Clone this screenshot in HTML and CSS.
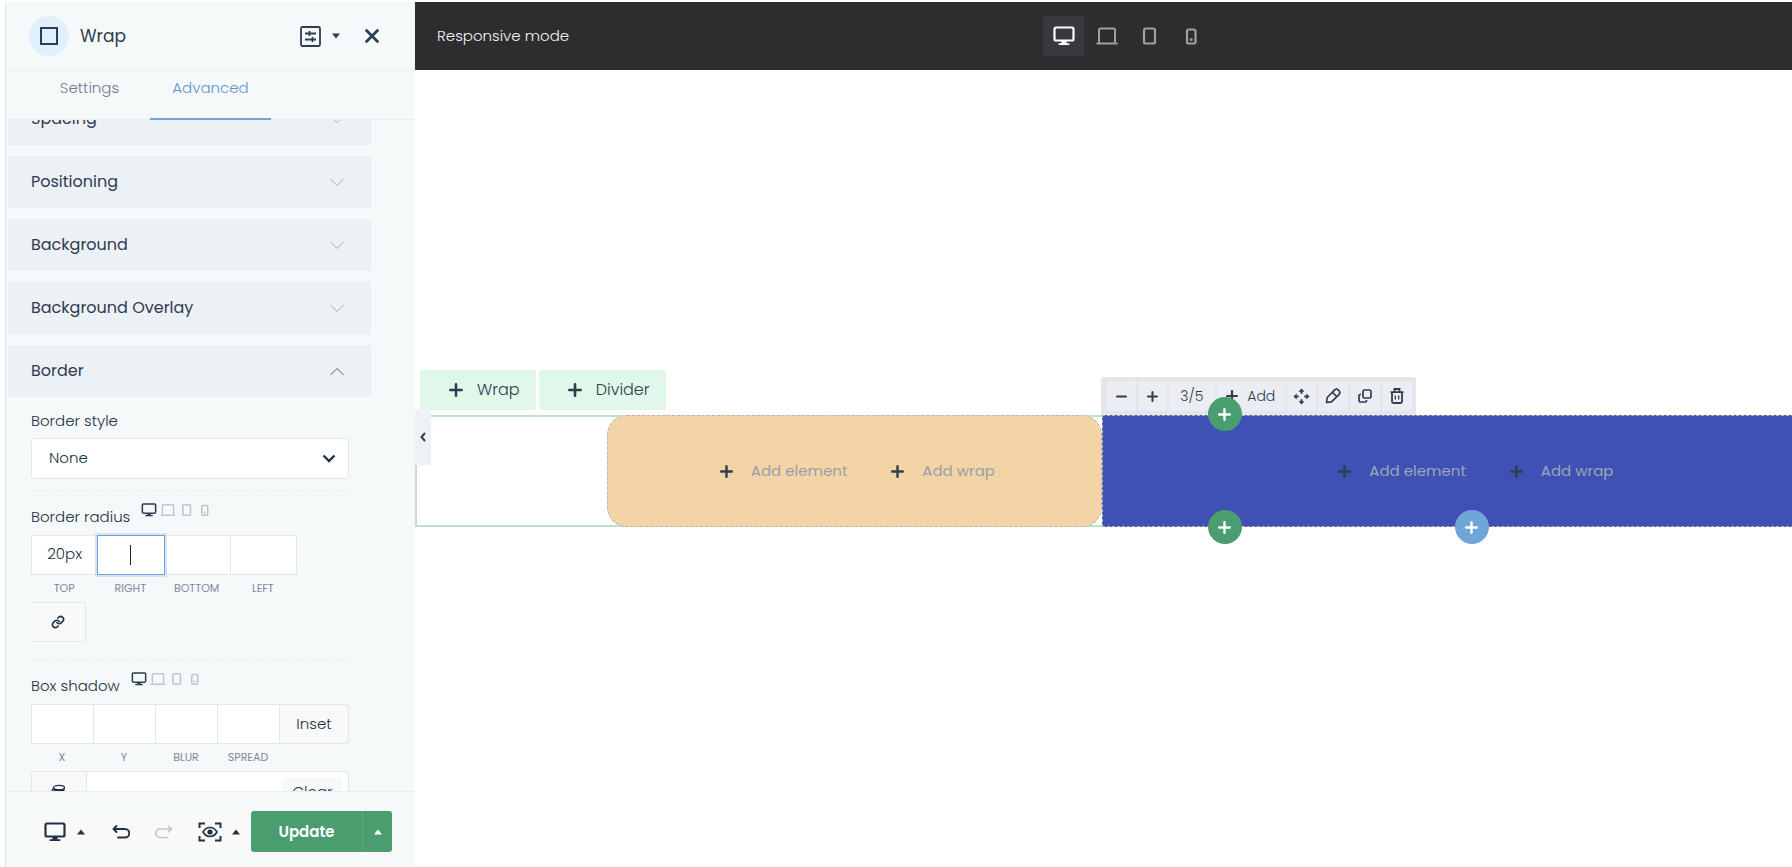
FILE: index.html
```
<!DOCTYPE html>
<html lang="en">
<head>
<meta charset="utf-8">
<title>Wrap – Advanced</title>
<link rel="stylesheet" href="styles.css">
</head>
<body>
<svg class="defs" aria-hidden="true">
  <symbol id="desktop" viewBox="0 0 22 20"><rect x="1.5" y="1.5" width="19" height="13" rx="1.5" fill="none" stroke="currentColor" stroke-width="2.200"/><path d="M8.500 15h5v2.200h2.200a.9.900 0 0 1 0 1.800H6.300a.9.900 0 0 1 0-1.800h2.200z" fill="currentColor"/></symbol>
  <symbol id="laptop" viewBox="0 0 22 20"><path d="M3 16.500V4A1.500 1.500 0 0 1 4.500 2.500h13A1.500 1.500 0 0 1 19 4v12.500" fill="none" stroke="currentColor" stroke-width="2"/><path d="M1.300 17.500h19.400" stroke="currentColor" stroke-width="2" stroke-linecap="round"/></symbol>
  <symbol id="tablet" viewBox="0 0 22 20"><rect x="5" y="2.500" width="11" height="15" rx="1.800" fill="none" stroke="currentColor" stroke-width="2.200"/></symbol>
  <symbol id="mobile" viewBox="0 0 22 20"><rect x="5" y="3.500" width="8.500" height="14" rx="1.800" fill="none" stroke="currentColor" stroke-width="2.200"/><circle cx="9.200" cy="13.500" r="1.500" fill="currentColor"/></symbol>
  <symbol id="plus" viewBox="0 0 14 14"><path d="M7 1.300v11.400M1.300 7h11.400" stroke="currentColor" stroke-width="2.600" stroke-linecap="round"/></symbol>
  <symbol id="up" viewBox="0 0 8 6"><path d="M4 .4 8 5.600H0z" fill="currentColor"/></symbol>
  <symbol id="chevron" viewBox="0 0 16 9"><path d="M1.500 1L8 7.500 14.500 1" fill="none" stroke="currentColor" stroke-width="1"/></symbol>
</svg>

<aside class="sidebar">
  <header class="head">
    <span class="badge"><svg width="20" height="20" viewBox="0 0 20 20"><rect x="2" y="2" width="16" height="16" fill="none" stroke="currentColor" stroke-width="2"/></svg></span>
    <h1 class="title">Wrap</h1>
    <button class="plain options" aria-label="Presets">
      <svg width="21" height="21" viewBox="0 0 21 21" fill="none" stroke="currentColor" stroke-width="1.800"><rect x="1" y="1" width="19" height="19" rx="1.500"/><path d="M5 7.500h11M5 13.500h11M9.500 5v5M12.500 11v5"/></svg>
      <svg width="8" height="6" viewBox="0 0 8 6"><path d="M0 .4h8L4 5.600z" fill="currentColor"/></svg>
    </button>
    <button class="plain close" aria-label="Close"><svg width="16" height="16" viewBox="0 0 16 16"><path d="M2.500 2.500l11 11m0-11l-11 11" stroke="currentColor" stroke-width="2.800" stroke-linecap="round"/></svg></button>
  </header>
  <nav class="tabs">
    <button class="tab">Settings</button>
    <button class="tab active">Advanced</button>
  </nav>

  <div class="scroller">
    <div class="groups">
      <button class="group">Spacing<svg width="16" height="9"><use href="#chevron"/></svg></button>
      <button class="group">Positioning<svg width="16" height="9"><use href="#chevron"/></svg></button>
      <button class="group">Background<svg width="16" height="9"><use href="#chevron"/></svg></button>
      <button class="group">Background Overlay<svg width="16" height="9"><use href="#chevron"/></svg></button>
      <button class="group open">Border<svg width="16" height="9"><use href="#chevron"/></svg></button>
    </div>
    <div class="fields">
      <div class="field">
        <label class="label" for="style">Border style</label>
        <div class="select-wrap">
          <select class="select" id="style"><option>None</option></select>
          <svg class="arrow" width="14" height="9" viewBox="0 0 14 9"><path d="M1.500 1.500L7 7l5.500-5.500" fill="none" stroke="currentColor" stroke-width="2.400"/></svg>
        </div>
      </div>
      <div class="field">
        <div class="label-row"><span class="label">Border radius</span>
          <span class="devs"><svg class="on" width="16" height="14"><use href="#desktop"/></svg><svg width="16" height="14"><use href="#laptop"/></svg><svg width="16" height="14"><use href="#tablet"/></svg><svg width="16" height="14"><use href="#mobile"/></svg></span>
        </div>
        <div class="radius">
          <label class="cell"><input class="box" value="20px"><span>TOP</span></label>
          <label class="cell focus"><input class="box"><i class="caret"></i><span>RIGHT</span></label>
          <label class="cell"><input class="box"><span>BOTTOM</span></label>
          <label class="cell"><input class="box"><span>LEFT</span></label>
        </div>
        <button class="link" aria-label="Link values"><svg width="14" height="14" viewBox="0 0 24 24" fill="none" stroke="currentColor" stroke-width="2.800" stroke-linecap="round" stroke-linejoin="round"><path d="M10 13a5 5 0 0 0 7.500.5l3-3a5 5 0 0 0-7-7l-1.700 1.700"/><path d="M14 11a5 5 0 0 0-7.500-.5l-3 3a5 5 0 0 0 7 7l1.700-1.700"/></svg></button>
      </div>
      <div class="field">
        <div class="label-row"><span class="label">Box shadow</span>
          <span class="devs"><svg class="on" width="16" height="14"><use href="#desktop"/></svg><svg width="16" height="14"><use href="#laptop"/></svg><svg width="16" height="14"><use href="#tablet"/></svg><svg width="16" height="14"><use href="#mobile"/></svg></span>
        </div>
        <div class="shadow">
          <label class="cell"><input class="box"><span>X</span></label>
          <label class="cell"><input class="box"><span>Y</span></label>
          <label class="cell"><input class="box"><span>BLUR</span></label>
          <label class="cell"><input class="box"><span>SPREAD</span></label>
          <button class="inset">Inset</button>
        </div>
        <div class="color">
          <button class="swatch" aria-label="Pick colour"><svg width="16" height="16" viewBox="0 0 16 16"><path d="M2.500 4v8c0 3 11 3 11 0V4z" fill="currentColor"/><ellipse cx="8" cy="3.600" rx="5.500" ry="2.200" fill="#fff" stroke="currentColor" stroke-width="1.400"/><path d="M2.500 4L1 7" stroke="currentColor" stroke-width="1.400"/></svg></button>
          <input class="color-input" aria-label="Shadow colour">
          <button class="clear">Clear</button>
        </div>
      </div>
    </div>
  </div>

  <footer class="foot">
    <button class="tool preview" aria-label="Device"><svg width="22" height="20"><use href="#desktop"/></svg><svg width="8" height="6"><use href="#up"/></svg></button>
    <button class="tool undo" aria-label="Undo"><svg width="18" height="16" viewBox="0 0 18 16" fill="none" stroke="currentColor" stroke-width="1.900" stroke-linecap="round"><path d="M4.500 2L1.500 5l3 3M2 5h11a4 4 0 0 1 0 8.500H6"/></svg></button>
    <button class="tool redo" aria-label="Redo"><svg width="18" height="16" viewBox="0 0 18 16" fill="none" stroke="currentColor" stroke-width="1.700" stroke-linecap="round"><path d="M13.500 2l3 3-3 3M16 5H5a4 4 0 0 0 0 8.500H12"/></svg></button>
    <button class="tool view" aria-label="Preview"><svg width="24" height="20" viewBox="0 0 24 20" fill="none" stroke="currentColor" stroke-width="2"><path d="M1.500 6V1.500H7M17 1.500h5.500V6M22.500 14v4.500H17M7 18.500H1.500V14"/><path d="M5 10c3.500-6 10.500-6 14 0-3.500 6-10.500 6-14 0z" stroke-width="1.600"/><circle cx="12" cy="10" r="2.600" fill="currentColor" stroke="none"/></svg><svg width="8" height="6"><use href="#up"/></svg></button>
    <div class="save"><button class="update">Update</button><button class="more" aria-label="More"><svg width="8" height="6"><use href="#up"/></svg></button></div>
  </footer>
</aside>

<main class="main">
  <header class="bar">
    <span>Responsive mode</span>
    <div class="modes">
      <button class="mode on" aria-label="Desktop"><svg width="22" height="20"><use href="#desktop"/></svg></button>
      <button class="mode" aria-label="Laptop"><svg width="22" height="20"><use href="#laptop"/></svg></button>
      <button class="mode" aria-label="Tablet"><svg width="22" height="20"><use href="#tablet"/></svg></button>
      <button class="mode" aria-label="Mobile"><svg width="22" height="20"><use href="#mobile"/></svg></button>
    </div>
  </header>
  <div class="canvas">
    <div class="adders">
      <button class="adder"><svg width="14" height="14"><use href="#plus"/></svg>Wrap</button>
      <button class="adder"><svg width="14" height="14"><use href="#plus"/></svg>Divider</button>
    </div>
    <section class="section">
      <button class="collapse" aria-label="Collapse panel"><svg width="6" height="10" viewBox="0 0 6 10"><path d="M5 1L1.500 5 5 9" fill="none" stroke="currentColor" stroke-width="2"/></svg></button>
      <div class="wraps">
        <div class="wrap sand">
          <button class="insert"><svg width="13" height="13"><use href="#plus"/></svg>Add element</button>
          <button class="insert"><svg width="13" height="13"><use href="#plus"/></svg>Add wrap</button>
        </div>
        <div class="wrap blue">
          <button class="insert"><svg width="13" height="13"><use href="#plus"/></svg>Add element</button>
          <button class="insert"><svg width="13" height="13"><use href="#plus"/></svg>Add wrap</button>
          <div class="toolbar">
            <button aria-label="Narrower"><svg width="11" height="11" viewBox="0 0 14 14"><path d="M1.300 7h11.400" stroke="currentColor" stroke-width="2.600" stroke-linecap="round"/></svg></button>
            <button aria-label="Wider"><svg width="11" height="11"><use href="#plus"/></svg></button>
            <button class="size">3/5</button>
            <button class="add"><svg width="12" height="12"><use href="#plus"/></svg>Add</button>
            <button aria-label="Move"><svg width="17" height="17" viewBox="0 0 17 17" fill="currentColor"><path d="M8.500 .5l3 3.200h-2v2h-2v-2h-2zM8.500 16.500l3-3.200h-2v-2h-2v2h-2zM.5 8.500l3.200-3v2h2v2h-2v2zM16.500 8.500l-3.200-3v2h-2v2h2v2z"/></svg></button>
            <button class="wide" aria-label="Edit"><svg width="16" height="16" viewBox="0 0 16 16" fill="none" stroke="currentColor" stroke-width="1.700" stroke-linejoin="round" stroke-linecap="round"><path d="M1.500 14.500l.7-5L9.200 2.300a3.100 3.100 0 0 1 4.500 4.500L6.500 13.800zM8 4.800l3.200 3.200"/></svg></button>
            <button class="wide" aria-label="Duplicate"><svg width="14" height="14" viewBox="0 0 14 14" fill="none" stroke="currentColor" stroke-width="1.700"><rect x="5" y="1" width="8" height="8" rx="1.500"/><path d="M3 5.500h-.7A1.300 1.300 0 0 0 1 6.800v4.900A1.300 1.300 0 0 0 2.300 13h4.900a1.300 1.300 0 0 0 1.300-1.300V11"/></svg></button>
            <button class="wide" aria-label="Delete"><svg width="14" height="16" viewBox="0 0 14 16" fill="none" stroke="currentColor" stroke-width="1.800"><path d="M.5 4.200h13M4.500 4V1h5v3M2 4v9.500A1.500 1.500 0 0 0 3.500 15h7a1.500 1.500 0 0 0 1.500-1.500V4"/><path d="M5.300 7.500v4M8.700 7.500v4" stroke-width="1.300"/></svg></button>
          </div>
          <button class="dot top" aria-label="Add before"><svg width="13" height="13"><use href="#plus"/></svg></button>
          <button class="dot bottom" aria-label="Add after"><svg width="13" height="13"><use href="#plus"/></svg></button>
          <button class="dot center" aria-label="Add section"><svg width="13" height="13"><use href="#plus"/></svg></button>
        </div>
      </div>
    </section>
  </div>
</main>
</body>
</html>
```
FILE: styles.css
```
* { box-sizing: border-box; }
body {
  margin: 0; padding: 2px 0 0 5px; height: 100vh; display: flex; overflow: hidden;
  background: #fff; color: #2c3e50;
  font: 300 15px/20px Poppins, Inter, sans-serif;
}
button, input, select { font: inherit; color: inherit; margin: 0; padding: 0; border: 0; background: none; }
svg { display: block; flex: none; }
.defs { position: absolute; width: 0; height: 0; }

.sidebar { width: 410px; flex: none; display: flex; flex-direction: column; background: #f5f9fa; border-left: 1px solid #dfe7ec; color: #223245; }
.head { height: 69px; flex: none; display: flex; align-items: center; padding: 0 35px 0 23px; border-bottom: 1px solid #e8edf4; color: #2c3e50; }
.badge { width: 40px; height: 40px; border-radius: 50%; background: #e1f0ff; display: grid; place-items: center; }
.title { flex: 1; margin: 0 0 0 11px; font-size: 17px; font-weight: 400; }
.options { display: flex; align-items: center; gap: 11px; }
.close { margin-left: 24px; }
.tabs { height: 49px; flex: none; display: flex; padding-left: 23px; border-bottom: 1px solid #e8edf4; }
.tab { width: 121px; height: 49px; padding-bottom: 14px; color: #6f7a96; border-bottom: 2px solid transparent; }
.tab.active { color: #5f94d0; border-color: #70a5d8; }

.scroller { flex: 1; min-height: 0; overflow: hidden; }
.groups { display: grid; gap: 11px; margin: -27px 44px 0 2px; }
.group { height: 52px; display: flex; align-items: center; justify-content: space-between; padding: 0 26px 0 23px; background: #ecf1f6; font-size: 16px; font-weight: 400; color: #2f3a4f; }
.group svg { color: #a7adb5; }
.group.open svg { color: #5b5f60; transform: rotate(180deg); }
.fields { padding: 13px 66px 0 25px; }
.field { padding-bottom: 11px; margin-bottom: 12px; border-bottom: 1px dashed #e5eaee; }
.field:nth-child(2) { padding-bottom: 17px; }
.label { display: block; line-height: 22px; }
.select-wrap { position: relative; margin-top: 6px; }
.select { display: block; width: 100%; height: 41px; padding: 0 0 2px 17px; border: 1px solid #e1e7eb; border-radius: 3px; background: #fff; appearance: none; }
.arrow { position: absolute; right: 13px; top: 16px; pointer-events: none; }
.label-row { display: flex; gap: 11px; height: 32px; }
.label-row .label { padding-top: 3px; }
.devs { display: flex; gap: 3px; color: #bfc5cb; }
.devs .on { color: #2c3e50; }
.radius, .shadow { display: flex; }
.cell { position: relative; flex: 1; text-align: center; font-size: 11px; font-weight: 400; line-height: 16px; color: #7d88a3; }
.cell span { display: block; margin-top: 5px; }
.cell .box { display: block; width: calc(100% + 1px); height: 40px; padding-bottom: 3px; border: 1px solid #e1e7eb; background: #fff; text-align: center; font-size: 15px; font-weight: 300; color: #223245; }
.radius { width: 265px; }
.focus .box { position: relative; z-index: 1; border-color: #70a1d7; box-shadow: 0 0 0 2px #d5e4f2; }
.caret { position: absolute; z-index: 2; left: 50%; top: 10px; width: 1px; height: 20px; background: #1c2733; }
.link { display: grid; place-items: center; width: 55px; height: 40px; margin-top: 6px; border: 1px solid #e1e7eb; border-left: 0; border-radius: 0 3px 3px 0; background: #f9f9f9; }
.inset { width: 70px; height: 40px; border: 1px solid #e1e7eb; border-radius: 0 3px 3px 0; background: #f9f9f9; z-index: 1; }
.color { display: flex; height: 42px; margin-top: 6px; border: 1px solid #e1e7eb; border-radius: 3px; background: #fff; }
.swatch { width: 55px; display: grid; place-items: center; background: #f9f9f9; border-right: 1px solid #e1e7eb; }
.color-input { flex: 1; min-width: 0; }
.clear { width: 59px; height: 28px; margin: 6px; border-radius: 3px; background: #f7f8f9; }

.foot { height: 76px; flex: none; display: flex; align-items: flex-start; padding: 19px 0 0 25px; border-top: 1px solid #e8edf1; }
.tool { height: 41px; display: flex; align-items: center; justify-content: center; gap: 11px; background: #f9f9f9; border-radius: 3px; }
.preview { width: 60px; margin-right: 9px; padding-left: 6px; }
.undo, .redo { width: 41px; margin-right: 2px; }
.redo { color: #c2c6ca; }
.view { width: 59px; margin: 0 3px; gap: 10px; }
.save { display: flex; height: 41px; border-radius: 3px; background: #4a9d6f; color: #fff; overflow: hidden; }
.update { width: 112px; font-weight: 600; border-right: 1px solid #5dab80; }
.more { width: 29px; display: grid; place-items: center; }

.main { flex: 1; min-width: 0; display: flex; flex-direction: column; overflow: hidden; }
.bar { height: 68px; flex: none; display: grid; grid-template-columns: 606fr 749fr; align-items: center; padding-left: 22px; background: #2d2d2f; color: #f2f2f2; }
.modes { display: flex; gap: 2px; }
.mode { width: 41px; height: 40px; display: grid; place-items: center; border-radius: 3px; color: #a0a0a1; }
.mode.on { background: #39393d; color: #fff; }
.canvas { padding-top: 300px; }
.adders { display: flex; gap: 3px; padding: 0 5px 5px; }
.adder { height: 40px; display: flex; align-items: center; gap: 14px; padding: 0 16px 0 29px; border-radius: 3px; background: #e0f7e9; font-size: 16px; }
.section { position: relative; border: 2px solid #bfe0cf; border-right: 0; }
.collapse { position: absolute; left: -2px; top: -8px; width: 16px; height: 56px; display: grid; place-items: center; background: #eef2f6; border-radius: 0 3px 3px 0; }
.wraps { display: grid; grid-template-columns: 2fr 3fr; margin: -2px -52px -2px 190px; }
.wrap { position: relative; min-width: 0; height: 112px; display: flex; align-items: center; justify-content: center; gap: 44px; padding-left: 6px; border: 1px dashed #b5b8b8; }
.sand { background: #f3d4a6; border-radius: 20px; }
.blue { background: #3f51b5; }
.insert { display: flex; align-items: center; gap: 18px; font-weight: 400; color: #999fa9; }
.insert svg { color: #2c3e50; }
.blue .insert { color: #9aa6b4; }
.toolbar { position: absolute; left: -2px; bottom: 111px; display: flex; gap: 2px; height: 38px; padding: 4px 4px 4px 6px; background: #e4e6ea; border-radius: 3px 3px 0 0; }
.toolbar button { width: 29px; height: 30px; display: flex; align-items: center; justify-content: center; gap: 9px; background: #ecedf2; border-radius: 3px; font-size: 14px; }
.toolbar .wide { width: 30px; }
.toolbar .size { width: 46px; }
.toolbar .add { width: 68px; }
.dot { position: absolute; width: 34px; height: 34px; display: grid; place-items: center; border-radius: 50%; background: #4a9d6f; color: #fff; }
.dot.top { left: 105px; top: -19px; }
.dot.bottom { left: 105px; bottom: -18px; }
.dot.center { left: calc(50% - 18px); bottom: -18px; background: #70a5d8; }
```
